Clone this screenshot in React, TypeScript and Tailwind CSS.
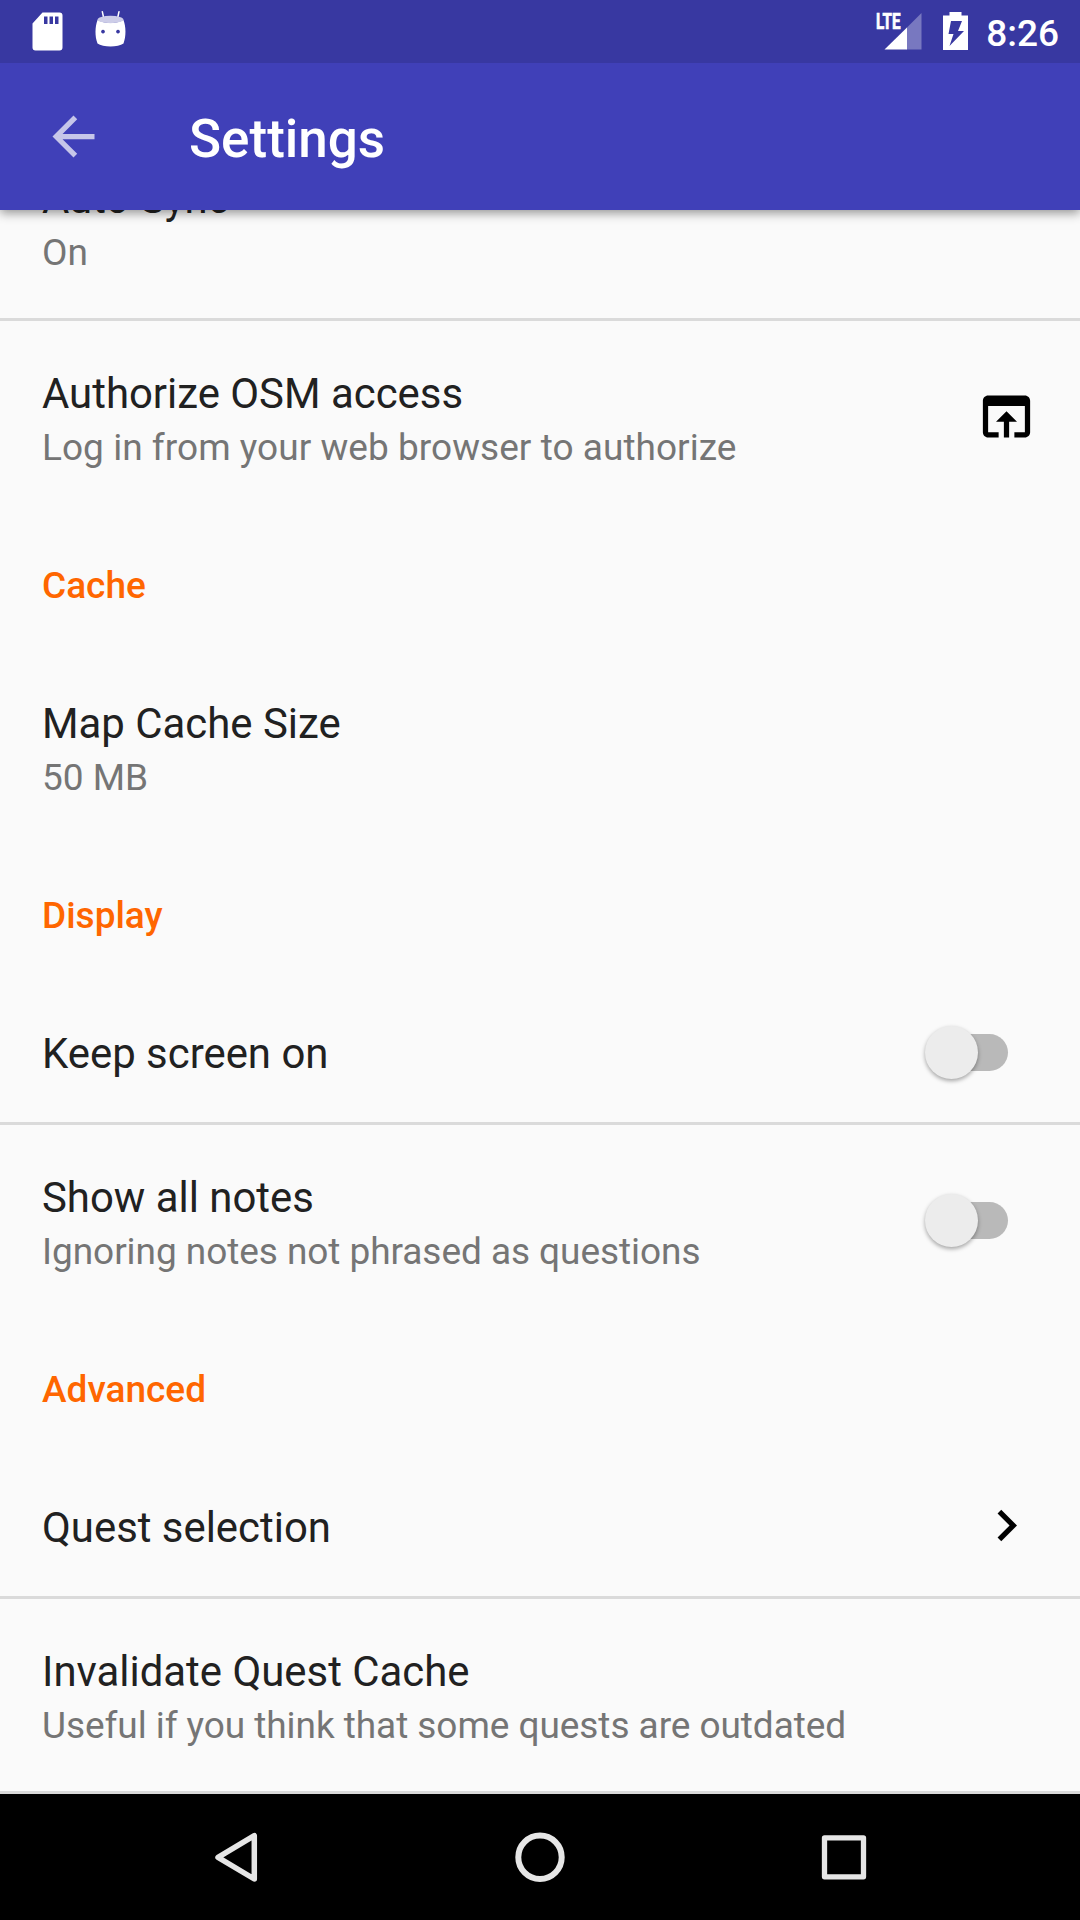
import type { ReactNode } from "react";

function StatusBar() {
  return (
    <header className="relative z-20 flex h-[63px] shrink-0 items-start justify-between bg-[#3838a1]">
      <svg width="160" height="63" viewBox="0 0 160 63" fill="#fff">
        <path
          fillRule="evenodd"
          d="M42.5 12.5H59.5a3 3 0 0 1 3 3V47.5a3 3 0 0 1-3 3H35.500a3 3 0 0 1-3-3V23.500zM44 16.500V24H47.500V16.500zM49.500 16.500V24H53V16.500zM55 16.500V24H58.500V16.500z"
        />
        <path d="M102.300 11.700L103.800 18.500M119 11.700L117.500 18.500" stroke="#fff" strokeWidth="1.500" strokeLinecap="round" />
        <path
          fillRule="evenodd"
          d="M97.500 20C105 24 116 24 123.500 20C126 27 126.300 36 123.500 43.500C118 47.500 103 47.500 97.500 43.500C94.700 36 95 27 97.500 20zM103 29.700a1.900 1.900 0 1 0 .01 0zM118 29.700a1.900 1.900 0 1 0 .01 0z"
        />
        <ellipse cx="110.500" cy="19.500" rx="13" ry="3.700" fill="#cdcde8" />
      </svg>
      <div className="flex h-[63px] items-start pr-[21px]">
        <svg width="110" height="63" viewBox="870 0 110 63">
          <text
            x="876"
            y="29"
            fontFamily="Roboto"
            fontWeight="700"
            fontSize="21.500"
            textLength="24.500"
            lengthAdjust="spacingAndGlyphs"
            fill="#fff"
            stroke="#fff"
            strokeWidth="0.700"
          >
            LTE
          </text>
          <path d="M921.500 13V49.500H906.500V28z" fill="#7878c0" />
          <path d="M907 27.500V49.500H884.500z" fill="#fff" />
          <path
            fill="#fff"
            fillRule="evenodd"
            d="M949.500 12H961.500V15.500H968V50H943V15.500H949.500zM951 21L948.500 34H953.500L949.500 46L964 31H958L962 21z"
          />
        </svg>
        <span className="ml-[6px] mt-[12px] text-[37px] font-medium leading-[44px] text-white">8:26</span>
      </div>
    </header>
  );
}

function AppBar() {
  return (
    <div className="relative z-10 flex h-[147px] shrink-0 items-center bg-[#4040b8] shadow-[0_3px_10px_rgba(0,0,0,0.42)]">
      <svg className="ml-[42px]" width="63" height="63" viewBox="0 0 24 24" fill="#c6c6e9">
        <path d="M20 11H7.830l5.590-5.590L12 4l-8 8 8 8 1.410-1.410L7.830 13H20v-2z" />
      </svg>
      <h1 className="ml-[84px] pt-[4px] text-[53px] font-medium leading-[62px] text-white">Settings</h1>
    </div>
  );
}

function Category({ label }: { label: string }) {
  return (
    <h2 className="h-[138px] shrink-0 px-[42px] pt-[51px] text-[37px] font-medium leading-[43px] text-[#ff6600]">
      {label}
    </h2>
  );
}

type RowProps = { title: string; summary?: string; tracking?: string; divider?: boolean; children?: ReactNode };

function Row({ title, summary, tracking = "", divider, children }: RowProps) {
  return (
    <div className={divider ? "shrink-0 border-b-[3px] border-[#dadada]" : "shrink-0"}>
      <div className={summary ? "flex h-[192px] items-center justify-between px-[42px]" : "flex h-[141px] items-center justify-between px-[42px]"}>
        <div className={summary ? "pt-[3px]" : "pt-[4px]"}>
          <div className="text-[41.900px] leading-[50px] text-[#212121]">{title}</div>
          {summary && <div className={`mt-[7px] text-[37px] leading-[43px] text-[#757575] ${tracking}`}>{summary}</div>}
        </div>
        {children}
      </div>
    </div>
  );
}

function Switch({ className = "" }: { className?: string }) {
  return (
    <div className={`mr-[30px] flex h-[53px] w-[83px] items-center ${className}`}>
      <div className="h-[53px] w-[53px] shrink-0 rounded-full bg-[#ececec] shadow-[0_2px_4px_rgba(0,0,0,0.35)]" />
      <div className="relative -z-10 -ml-[35px] h-[37px] w-[65px] rounded-full bg-[#b9b9b9]" />
    </div>
  );
}

function NavBar() {
  return (
    <nav className="flex h-[126px] shrink-0 items-center justify-center bg-black">
      <svg width="1080" height="126" fill="none" stroke="#e6e6e6" strokeLinejoin="round">
        <path d="M254.300 41.600V85L218 63.300z" strokeWidth="5.500" />
        <circle cx="540" cy="63.200" r="21.700" strokeWidth="6" />
        <rect x="824.500" y="43.800" width="39" height="39" strokeWidth="5.300" />
      </svg>
    </nav>
  );
}

export default function App() {
  return (
    <div className="flex h-[1920px] w-[1080px] flex-col overflow-hidden bg-[#fafafa] font-['Roboto',sans-serif]">
      <StatusBar />
      <AppBar />
      <main className="isolate flex min-h-0 flex-1 flex-col justify-end overflow-hidden">
        <Row title="Auto Sync" summary="On" divider />
        <Row title="Authorize OSM access" summary="Log in from your web browser to authorize" tracking="tracking-[0.04px]">
          <svg className="mb-[2px]" width="63" height="63" viewBox="0 0 24 24">
            <path d="M19 4H5c-1.110 0-2 .9-2 2v12c0 1.100.89 2 2 2h4v-2H5V8h14v10h-4v2h4c1.100 0 2-.9 2-2V6c0-1.100-.89-2-2-2zm-7 6l-4 4h3v6h2v-6h3l-4-4z" />
          </svg>
        </Row>
        <Category label="Cache" />
        <Row title="Map Cache Size" summary="50 MB" />
        <Category label="Display" />
        <Row title="Keep screen on" divider>
          <Switch className="mt-px" />
        </Row>
        <Row title="Show all notes" summary="Ignoring notes not phrased as questions" tracking="tracking-[-0.06px]">
          <Switch className="mb-px" />
        </Row>
        <Category label="Advanced" />
        <Row title="Quest selection" divider>
          <svg width="63" height="63" viewBox="0 0 24 24">
            <path d="M10 6L8.590 7.410 13.170 12l-4.580 4.590L10 18l6-6z" />
          </svg>
        </Row>
        <Row title="Invalidate Quest Cache" summary="Useful if you think that some quests are outdated" tracking="tracking-[-0.06px]" divider />
      </main>
      <NavBar />
    </div>
  );
}
